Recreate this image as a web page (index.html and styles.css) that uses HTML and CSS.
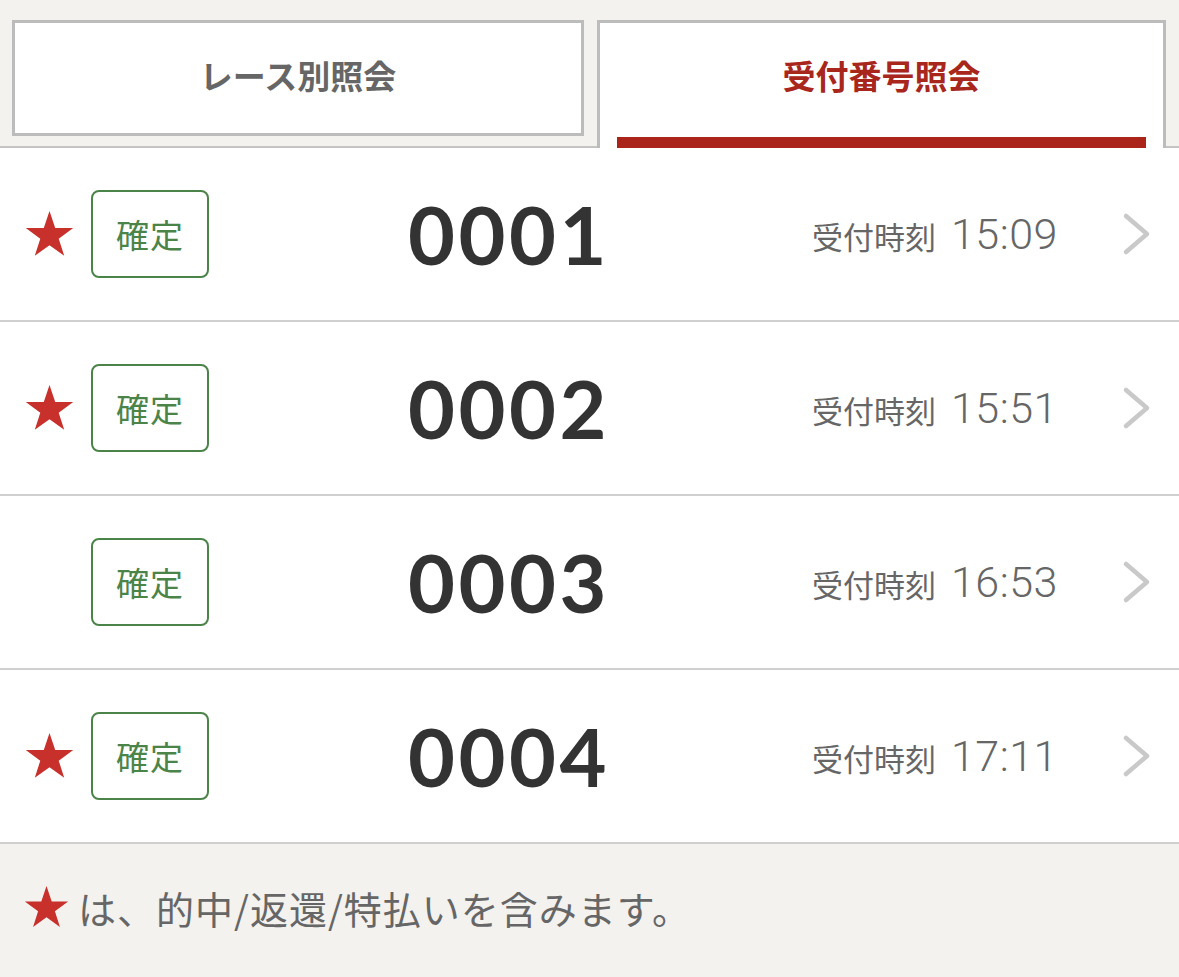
FILE: index.html
```html
<!DOCTYPE html>
<html lang="ja">
<head>
<meta charset="utf-8">
<title>受付番号照会</title>
<link rel="stylesheet" href="styles.css">
</head>
<body>
<div class="tabs">
  <div class="tab-cell">
    <div class="tab tab-inactive"><span class="tab-text">レース別照会</span></div>
  </div>
  <div class="tab tab-active">
    <span class="tab-label">受付番号照会</span>
    <span class="tab-bar"></span>
  </div>
  <div class="tab-rest"></div>
</div>

<ul class="list">
  <li class="row">
    <div class="mark"><svg class="star" viewBox="0 0 100 95"><polygon points="50,0 61.8,35.3 99,35.3 69,57.1 80.4,92.6 50,70.6 19.6,92.6 31,57.1 1,35.3 38.2,35.3"/></svg></div>
    <div class="badge">確定</div>
    <div class="num">0001</div>
    <div class="time"><span class="time-label">受付時刻</span> <span class="time-val">15:09</span></div>
    <svg class="chev" viewBox="0 0 30 44"><polyline points="4,4 25,22 4,40"/></svg>
  </li>
  <li class="row">
    <div class="mark"><svg class="star" viewBox="0 0 100 95"><polygon points="50,0 61.8,35.3 99,35.3 69,57.1 80.4,92.6 50,70.6 19.6,92.6 31,57.1 1,35.3 38.2,35.3"/></svg></div>
    <div class="badge">確定</div>
    <div class="num">0002</div>
    <div class="time"><span class="time-label">受付時刻</span> <span class="time-val">15:51</span></div>
    <svg class="chev" viewBox="0 0 30 44"><polyline points="4,4 25,22 4,40"/></svg>
  </li>
  <li class="row">
    <div class="mark"></div>
    <div class="badge">確定</div>
    <div class="num">0003</div>
    <div class="time"><span class="time-label">受付時刻</span> <span class="time-val">16:53</span></div>
    <svg class="chev" viewBox="0 0 30 44"><polyline points="4,4 25,22 4,40"/></svg>
  </li>
  <li class="row">
    <div class="mark"><svg class="star" viewBox="0 0 100 95"><polygon points="50,0 61.8,35.3 99,35.3 69,57.1 80.4,92.6 50,70.6 19.6,92.6 31,57.1 1,35.3 38.2,35.3"/></svg></div>
    <div class="badge">確定</div>
    <div class="num">0004</div>
    <div class="time"><span class="time-label">受付時刻</span> <span class="time-val">17:11</span></div>
    <svg class="chev" viewBox="0 0 30 44"><polyline points="4,4 25,22 4,40"/></svg>
  </li>
</ul>

<div class="note">
  <svg class="note-star" viewBox="0 0 100 95"><polygon points="50,0 61.8,35.3 99,35.3 69,57.1 80.4,92.6 50,70.6 19.6,92.6 31,57.1 1,35.3 38.2,35.3"/></svg>
  <span class="note-text">は、的中/返還/特払いを含みます。</span>
</div>
</body>
</html>
```

FILE: styles.css
```css
* { box-sizing: border-box; }

html, body {
  margin: 0;
  padding: 0;
  background: #f3f2ef;
  font-family: "Noto Sans CJK JP", "Noto Sans", sans-serif;
}

.tabs {
  display: flex;
  padding-top: 20px;
  background: #f3f2ef;
}

.tab-cell {
  flex: 0 0 597px;
  padding: 0 13px 10px 12px;
  border-bottom: 2px solid #c4c4c4;
}

.tab {
  background: #fff;
  font-weight: 700;
  font-size: 33px;
  display: flex;
  align-items: center;
  justify-content: center;
}

.tab-inactive {
  height: 116px;
  border: 3px solid #bcbcbc;
  color: #666;
}

.tab-text {
  padding-bottom: 6px;
}

.tab-active {
  flex: 0 0 569px;
  height: 128px;
  border: 3px solid #bcbcbc;
  border-bottom: none;
  color: #a8261c;
  flex-direction: column;
  justify-content: flex-end;
}

.tab-label {
  flex: 1;
  display: flex;
  align-items: center;
  padding-bottom: 10px;
}

.tab-bar {
  align-self: stretch;
  margin: 0 17px;
  height: 11px;
  background: #ab2419;
}

.tab-rest {
  flex: 1;
  border-bottom: 2px solid #c4c4c4;
}

.list {
  list-style: none;
  margin: 0;
  padding: 0;
  background: #fff;
}

.row {
  display: flex;
  align-items: center;
  height: 174px;
  border-bottom: 2px solid #cfcfcf;
}

.mark {
  flex: 0 0 91px;
  padding-left: 25px;
  display: flex;
  align-items: center;
}

.star {
  width: 49px;
  height: 46px;
  fill: #c7302b;
  display: block;
}

.badge {
  flex: 0 0 118px;
  height: 88px;
  border: 2.5px solid #4b8449;
  border-radius: 8px;
  color: #4b8449;
  font-size: 33px;
  display: flex;
  align-items: center;
  justify-content: center;
  letter-spacing: 1px;
}

.num {
  flex: 0 0 404px;
  margin-left: 199px;
  font-family: "Lato", "Open Sans", sans-serif;
  font-weight: 700;
  font-size: 81px;
  letter-spacing: 3.5px;
  color: #333;
  line-height: 1;
  padding-bottom: 2px;
}

.time {
  flex: 1;
  color: #666;
  display: flex;
  align-items: baseline;
}

.time-label {
  font-size: 31px;
  margin-right: 15px;
}

.time-val {
  font-family: "Roboto", "Liberation Sans", sans-serif;
  font-weight: 300;
  font-size: 43px;
  letter-spacing: 0.5px;
}

.chev {
  width: 30px;
  height: 44px;
  margin-right: 27px;
  fill: none;
  stroke: #c9c9c9;
  stroke-width: 4.5;
  stroke-linecap: round;
  stroke-linejoin: round;
}

.note {
  display: flex;
  align-items: center;
  height: 132px;
  padding: 0 0 6px 24px;
  background: #f3f2ef;
  color: #666;
}

.note-star {
  width: 45px;
  height: 42px;
  fill: #c7302b;
  margin-right: 9px;
}

.note-text {
  font-size: 38px;
  letter-spacing: 1px;
}
```
